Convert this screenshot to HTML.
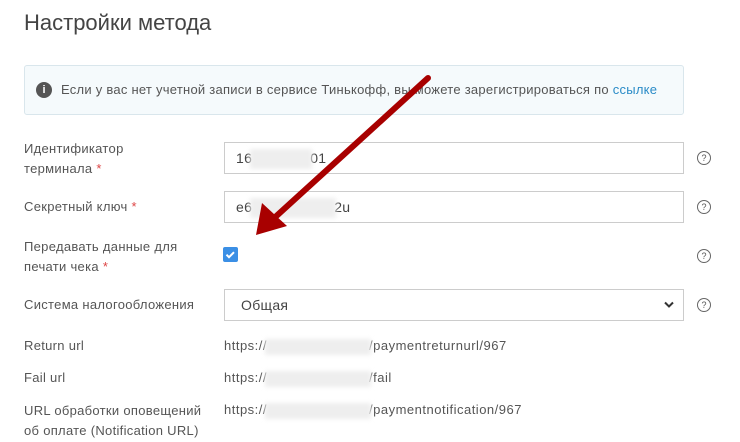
<!DOCTYPE html>
<html><head><meta charset="utf-8"><style>
body{margin:0;width:740px;height:442px;background:#fff;font-family:"Liberation Sans","Noto Sans CJK SC",sans-serif;color:#555;overflow:hidden;position:relative;font-size:13px;letter-spacing:0.3px}
.a{position:absolute}
.t{left:24px;top:10px;font-size:22px;color:#444;letter-spacing:0}
.info{left:24px;top:65px;width:658px;height:48px;border:1px solid #d9e6ec;background:#f5fafc;border-radius:3px}
.inp{left:224px;width:458px;height:30px;border:1px solid #ccc;background:#fff;font-size:14px;color:#444;line-height:30px;text-indent:11px}
.blur{display:inline-block;width:62px;height:20px;background:#eee;vertical-align:middle;filter:blur(2px);margin:0 -2px}
.q{left:697px;width:12px;height:12px;border:1px solid #666;border-radius:50%;font-size:9px;line-height:12px;text-align:center;color:#555;letter-spacing:0}
.lb{left:24px;line-height:20px}
.r{color:#d44}
.v{left:224px;letter-spacing:0.5px}
</style></head><body>
<div class="a t">Настройки метода</div>
<div class="a info"></div>
<div class="a" style="left:36px;top:82px;width:16px;height:16px;border-radius:50%;background:#555;color:#fff;font-weight:bold;font-size:11px;line-height:16px;text-align:center;letter-spacing:0">i</div>
<div class="a" style="left:61px;top:82px;letter-spacing:0.25px">Если у вас нет учетной записи в сервисе Тинькофф, вы можете зарегистрироваться по <span style="color:#2a8bc7">ссылке</span></div>

<div class="a lb" style="top:139px">Идентификатор<br>терминала <span class="r">*</span></div>
<div class="a inp" style="top:142px">16<span class="blur"></span>01</div>
<div class="a q" style="top:151px">?</div>

<div class="a lb" style="top:197px">Секретный ключ <span class="r">*</span></div>
<div class="a inp" style="top:191px">e6<span class="blur" style="width:86px"></span>2u</div>
<div class="a q" style="top:200px">?</div>

<div class="a lb" style="top:237px">Передавать данные для<br>печати чека <span class="r">*</span></div>
<div class="a" style="left:223px;top:247px;width:15px;height:15px;background:#3b8fe5;border-radius:2px"><svg width="15" height="15"><path d="M3.5 7.7l2.5 2.5 5-5" stroke="#fff" stroke-width="2" fill="none"/></svg></div>
<div class="a q" style="top:249px">?</div>

<div class="a lb" style="top:295px">Система налогообложения</div>
<div class="a inp" style="top:289px;text-indent:16px">Общая<svg class="a" style="right:8px;top:11px" width="12" height="8"><path d="M2 1.5l4 4 4-4" stroke="#333" stroke-width="2" fill="none"/></svg></div>
<div class="a q" style="top:298px">?</div>

<div class="a lb" style="top:336px">Return url</div>
<div class="a v" style="top:338px">https://<span class="blur" style="width:106px;height:16px"></span>/paymentreturnurl/967</div>
<div class="a lb" style="top:368px">Fail url</div>
<div class="a v" style="top:370px">https://<span class="blur" style="width:106px;height:16px"></span>/fail</div>
<div class="a lb" style="top:401px">URL обработки оповещений<br>об оплате (Notification URL)</div>
<div class="a v" style="top:402px">https://<span class="blur" style="width:106px;height:16px"></span>/paymentnotification/967</div>

<svg class="a" style="left:0;top:0" width="740" height="442"><path d="M428 78L272 220" stroke="#a80000" stroke-width="6" stroke-linecap="round"/><path d="M256 235L262 203L287 226Z" fill="#a80000"/></svg>
</body></html>
